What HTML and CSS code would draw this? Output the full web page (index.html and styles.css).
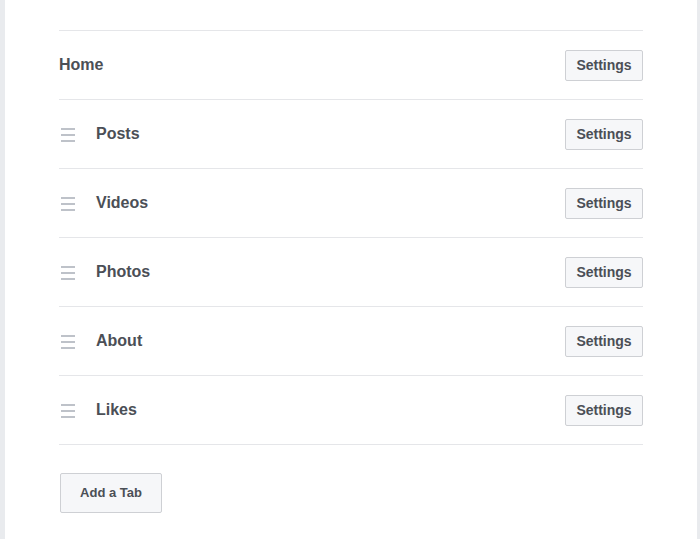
FILE: index.html
```html
<!DOCTYPE html>
<html>
<head>
<meta charset="utf-8">
<link rel="stylesheet" href="styles.css">
</head>
<body>
<div class="page">
  <div class="panel">
    <ul class="tabs">
      <li class="tab">
        <span class="tab-name home">Home</span>
        <button class="btn">Settings</button>
      </li>
      <li class="tab">
        <span class="handle"><i></i><i></i><i></i></span>
        <span class="tab-name">Posts</span>
        <button class="btn">Settings</button>
      </li>
      <li class="tab">
        <span class="handle"><i></i><i></i><i></i></span>
        <span class="tab-name">Videos</span>
        <button class="btn">Settings</button>
      </li>
      <li class="tab">
        <span class="handle"><i></i><i></i><i></i></span>
        <span class="tab-name">Photos</span>
        <button class="btn">Settings</button>
      </li>
      <li class="tab">
        <span class="handle"><i></i><i></i><i></i></span>
        <span class="tab-name">About</span>
        <button class="btn">Settings</button>
      </li>
      <li class="tab">
        <span class="handle"><i></i><i></i><i></i></span>
        <span class="tab-name">Likes</span>
        <button class="btn">Settings</button>
      </li>
    </ul>
    <div class="footer">
      <button class="btn btn-add">Add a Tab</button>
    </div>
  </div>
</div>
</body>
</html>
```

FILE: styles.css
```css
* { box-sizing: border-box; }
html, body {
  margin: 0;
  padding: 0;
  height: 100%;
}
body {
  background: #e9ebee;
  font-family: "Liberation Sans", Arial, Helvetica, sans-serif;
  color: #4b4f56;
}
.page {
  height: 539px;
  padding: 0 3px 0 5px;
  overflow: hidden;
}
.panel {
  background: #fff;
  height: 100%;
  padding: 30px 54px 0 54px;
}
.tabs {
  list-style: none;
  margin: 0;
  padding: 0;
  border-bottom: 1px solid #e5e6e9;
}
.tab {
  display: flex;
  align-items: center;
  height: 69px;
  border-top: 1px solid #e5e6e9;
}
.tab-name {
  font-size: 16px;
  font-weight: bold;
  flex: 1;
  line-height: 20px;
}
.handle {
  display: flex;
  flex-direction: column;
  gap: 4px;
  width: 14px;
  margin-left: 2px;
  margin-right: 21px;
  margin-top: 1px;
}
.handle i {
  display: block;
  height: 2px;
  background: #bec2c9;
}
.btn {
  font-family: "Liberation Sans", Arial, Helvetica, sans-serif;
  font-weight: bold;
  font-size: 14px;
  color: #4b4f56;
  background: #f6f7f9;
  border: 1px solid #ced0d4;
  border-radius: 2px;
  height: 31px;
  width: 78px;
  padding: 0;
  line-height: 29px;
  text-align: center;
}
.footer {
  padding-top: 28px;
}
.btn-add {
  width: 102px;
  height: 40px;
  font-size: 13px;
  line-height: 38px;
  margin-left: 1px;
}
```
